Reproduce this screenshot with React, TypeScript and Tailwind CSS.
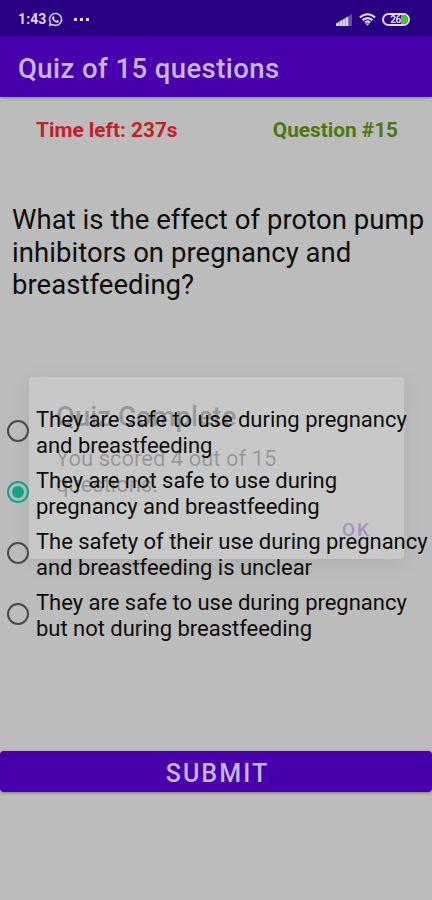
import { FaWhatsapp } from "react-icons/fa";

const options = [
  { lines: ["They are safe to use during pregnancy", "and breastfeeding"], checked: false },
  { lines: ["They are not safe to use during", "pregnancy and breastfeeding"], checked: true },
  { lines: ["The safety of their use during pregnancy", "and breastfeeding is unclear"], checked: false },
  { lines: ["They are safe to use during pregnancy", "but not during breastfeeding"], checked: false },
];

function StatusBar() {
  return (
    <div className="flex h-9 items-center bg-[#290083] pt-[3px] pr-[22px] pl-[18px] text-[#e0d8ec]">
      <span className="text-[14px] font-bold tracking-[0.1px]">1:43</span>
      <FaWhatsapp className="ml-[2px] h-[15px] w-[15px]" stroke="currentColor" strokeWidth="14" />
      <span className="ml-[11px] flex gap-[3px]">
        <i className="h-[3px] w-[3px] bg-current" />
        <i className="h-[3px] w-[3px] bg-current" />
        <i className="h-[3px] w-[3px] bg-current" />
      </span>
      <svg className="ml-auto h-3 w-4" viewBox="0 0 16 12" fill="currentColor">
        <path d="M0 12V9.5L3 8v4zM3.3 12V7.6L6 6v6zM6.3 12V5.7L9 4.3V12zM9.3 12V4l3.2-1.8V12z" />
        <path d="M13 12V2l3-2v12z" opacity=".35" />
      </svg>
      <svg className="ml-[7px] h-[13px] w-[17px]" viewBox="0 0 17 13" fill="none" stroke="currentColor" strokeWidth="2.2">
        <path d="M1 4.6C5.2.1 11.8.1 16 4.6M3.6 7.2c2.8-2.9 7-2.9 9.8 0" />
        <path d="M6 9.6c1.5-1.4 3.5-1.4 5 0" />
        <path d="M8.5 12.8 6.4 10.4h4.2z" fill="currentColor" stroke="none" />
      </svg>
      <span className="ml-[6px] flex h-[13px] w-7 items-center rounded-full border-2 border-current">
        <span className="flex-1 text-right text-[10px] leading-none font-bold tracking-[-0.3px]">26</span>
        <span className="h-[9px] w-[7px] rounded-r-full bg-[#4cc42c]" />
      </span>
    </div>
  );
}

function Radio({ checked }: { checked: boolean }) {
  return (
    <span
      className={`flex h-[22px] w-[22px] shrink-0 items-center justify-center rounded-full border-2 ${
        checked ? "border-[#0ea58f]" : "border-[#4a4a4a]"
      }`}
    >
      {checked && <span className="h-3 w-3 rounded-full bg-[#0ea58f]" />}
    </span>
  );
}

// Result dialog, caught part way through its fade
function ResultDialog() {
  return (
    <div className="absolute top-[377px] left-[29px] h-[182px] w-[375px] rounded-[3px] bg-white/18 px-[27px] pt-[24px] whitespace-nowrap shadow-[0_4px_24px_rgba(0,0,0,0.07)]">
      <h2 className="text-[27.5px] leading-[32px] font-medium text-black/25">Quiz Complete</h2>
      <p className="mt-[13px] text-[22px] leading-[26px] text-black/25">
        You scored 4 out of 15
        <br />
        questions.
      </p>
      <button className="absolute right-[33px] bottom-[18px] text-[19px] leading-[22px] font-medium tracking-[2px] text-[#6a35d0]/40">
        OK
      </button>
    </div>
  );
}

export default function App() {
  return (
    <div className="relative flex h-[900px] w-[432px] flex-col overflow-hidden bg-[#bcbcbc] font-[Roboto,sans-serif] whitespace-nowrap text-[#0c0c0c]">
      <StatusBar />
      <header className="flex h-[61px] items-center bg-[#4700ac] pt-[5px] pl-[18px] shadow-[0_1px_3px_rgba(0,0,0,0.3)]">
        <h1 className="text-[27.5px] font-medium tracking-[0.42px] text-[#c7b8df]">Quiz of 15 questions</h1>
      </header>

      <div className="mt-[22px] flex h-6 items-center justify-between pr-[34px] pl-9 text-[20.8px] font-bold">
        <span className="text-[#c8201f]">Time left: 237s</span>
        <span className="text-[#4a7a0c]">Question #15</span>
      </div>

      <p className="mt-[61px] pl-3 text-[27.5px] leading-[32.5px] tracking-[0.05px]">
        What is the effect of proton pump
        <br />
        inhibitors on pregnancy and
        <br />
        breastfeeding?
      </p>

      <ResultDialog />

      <div className="relative mt-[99px] flex flex-col pl-[7px]">
        {options.map((option, i) => (
          <label key={i} className="flex h-[61px] items-center gap-[7px]">
            <Radio checked={option.checked} />
            <span className="pt-[3px] text-[22px] leading-[25.5px] tracking-[-0.02px]">
              {option.lines[0]}
              <br />
              {option.lines[1]}
            </span>
          </label>
        ))}
      </div>

      <button className="mt-[106px] h-[41px] w-full rounded-[4px] bg-[#4700ac] pt-1 pl-[3px] text-[25px] leading-none font-medium tracking-[2.1px] text-[#c7b8df] shadow-[0_1px_3px_rgba(0,0,0,0.35)]">
        SUBMIT
      </button>
    </div>
  );
}
